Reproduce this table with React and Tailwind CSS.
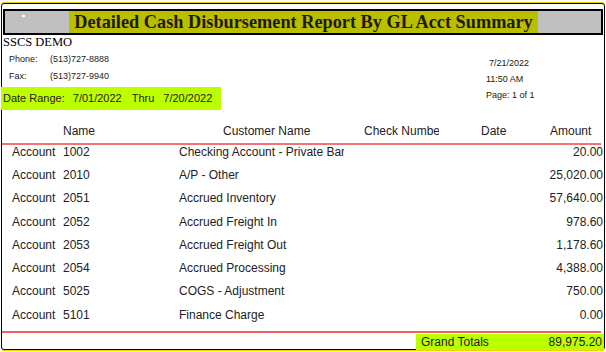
import React from 'react';

const rows = [
  { num: '1002', name: 'Checking Account - Private Bank', amt: '20.00' },
  { num: '2010', name: 'A/P - Other', amt: '25,020.00' },
  { num: '2051', name: 'Accrued Inventory', amt: '57,640.00' },
  { num: '2052', name: 'Accrued Freight In', amt: '978.60' },
  { num: '2053', name: 'Accrued Freight Out', amt: '1,178.60' },
  { num: '2054', name: 'Accrued Processing', amt: '4,388.00' },
  { num: '5025', name: 'COGS - Adjustment', amt: '750.00' },
  { num: '5101', name: 'Finance Charge', amt: '0.00' },
];

const App = () => {
  return (
    <div className="w-[606px] h-[352px] bg-white overflow-hidden pt-[3px] font-['Liberation_Sans',Arial,sans-serif] text-[#222]">
      <div className="ml-[1px] w-[604px] h-[347px] border border-black rounded-[3px] shadow-[0_-1px_0_#f2d200,0_1px_0_#f2d200] flex flex-col">
        {/* title bar */}
        <div className="shrink-0 mt-[5px] mx-[1px] h-[26px] border-[2px] border-black bg-[#c0c0c0] flex items-stretch">
          <div className="w-[64px] relative">
            <span className="absolute left-[17px] top-[4px] w-[3px] h-[2px] bg-white" />
          </div>
          <div className="w-[469px] bg-[#b9bf00] flex items-center justify-center whitespace-nowrap font-['Liberation_Serif','Times_New_Roman',serif] font-bold text-[18.3px] leading-none text-[#221a00]">
            Detailed Cash Disbursement Report By GL Acct Summary
          </div>
        </div>

        <div className="shrink-0 font-['Liberation_Serif','Times_New_Roman',serif] text-[12.5px] leading-[14px] pl-[1px] text-black">SSCS DEMO</div>

        <div className="shrink-0 flex">
          <div className="w-[484px]">
            <div className="flex text-[9px] h-[17px] items-center mt-[2px] pl-[7px]">
              <span className="w-[41px]">Phone:</span>
              <span>(513)727-8888</span>
            </div>
            <div className="flex text-[9px] h-[17px] items-center pl-[7px]">
              <span className="w-[41px]">Fax:</span>
              <span>(513)727-9940</span>
            </div>
            <div className="mt-[2px] ml-[-1px] w-[220px] h-[23px] bg-[#bbff00] flex items-center whitespace-nowrap text-[11px] text-[#2a2000] pl-[2px]">
              <span>Date Range:</span>
              <span className="ml-[8px]">7/01/2022</span>
              <span className="ml-[10px]">Thru</span>
              <span className="ml-[9px]">7/20/2022</span>
            </div>
          </div>
          <div className="text-[9px] pt-[6px] text-[#221a00]">
            <div className="h-[17px] flex items-center pl-[3px]">7/21/2022</div>
            <div className="h-[16px] flex items-center">11:50 AM</div>
            <div className="h-[15px] flex items-center">Page: 1 of 1</div>
          </div>
        </div>

        {/* column header */}
        <div className="shrink-0 mt-[13px] flex items-center h-[16px] text-[12px] whitespace-nowrap">
          <span className="w-[221px] pl-[61px]">Name</span>
          <span className="w-[141px]">Customer Name</span>
          <span className="w-[75px] overflow-hidden">Check Number</span>
          <span className="w-[41px]" />
          <span className="w-[70px] pl-[1px]">Date</span>
          <span>Amount</span>
        </div>
        <div className="shrink-0 mt-[4px] mr-[3px] h-[2px] bg-[#f07272]" />

        <div className="shrink-0 flex flex-col mt-[-5px]">
          {rows.map((r) => (
            <div key={r.num} className="flex items-center h-[23.3px] text-[12px] whitespace-nowrap">
              <span className="w-[61px] pl-[10px]">Account</span>
              <span className="w-[116px]">{r.num}</span>
              <span className="w-[165px] overflow-hidden">{r.name}</span>
              <span className="flex-1 text-right pr-[1px]">{r.amt}</span>
            </div>
          ))}
        </div>

        <div className="shrink-0 mt-[5px] mr-[3px] h-[2px] bg-[#f06060]" />
        <div className="shrink-0 flex justify-end mt-[1px]">
          <div className="w-[188px] h-[16px] bg-[#bbff00] flex items-center justify-between text-[12px] text-[#2a2000] pl-[5px] pr-[2px]">
            <span>Grand Totals</span>
            <span>89,975.20</span>
          </div>
        </div>
      </div>
    </div>
  );
};

export default App;
